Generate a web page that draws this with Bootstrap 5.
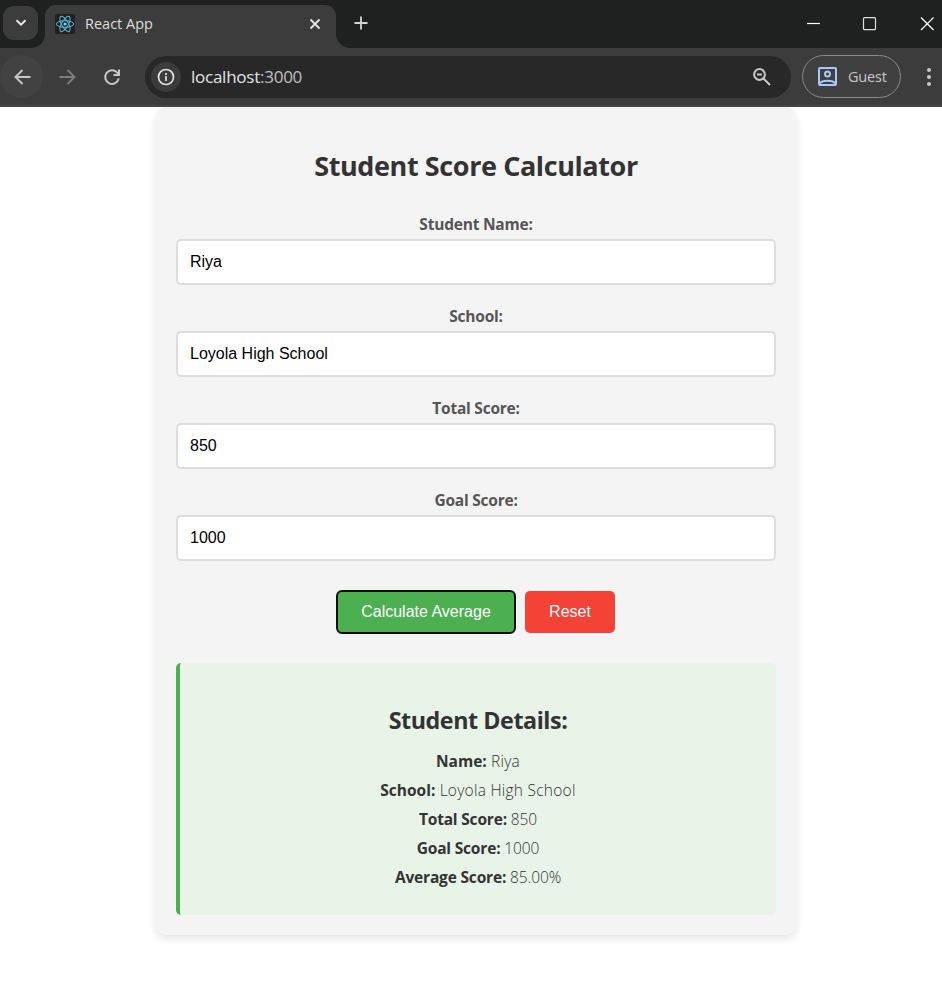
<!DOCTYPE html>
<html lang="en">
<head>
<meta charset="utf-8">
<meta name="viewport" content="width=device-width, initial-scale=1">
<title>React App</title>
<link href="https://cdn.jsdelivr.net/npm/bootstrap@5.3.0/dist/css/bootstrap.min.css" rel="stylesheet">
<style>
body{background:#fff;font-family:"Open Sans","Noto Sans",sans-serif;color:#333;min-height:100vh}
svg{display:block;flex:none}
/* browser window */
.tabstrip{height:48px;background:#1f2120;color:#dedede;padding-left:3px}
.tab-search{width:35px;height:34px;margin-top:6px;border-radius:11px;background:#3c3c3c}
.page-tab{position:relative;width:291px;height:43px;margin:5px 0 0 7px;padding:0 12px 6px 10px;border-radius:11px 11px 0 0;background:#3c3c3c}
.page-tab::before,.page-tab::after{content:"";position:absolute;bottom:0;width:14px;height:14px}
.page-tab::before{left:-14px;background:radial-gradient(circle at 0 0,transparent 13.5px,#3c3c3c 14.5px)}
.page-tab::after{right:-14px;background:radial-gradient(circle at 100% 0,transparent 13.5px,#3c3c3c 14.5px)}
.favicon{width:20px;height:20px;border-radius:2px;background:#202124}
.tab-title{font-size:14.5px;margin-left:10px;line-height:20px}
.win-ctl{padding:15px 6px 0 0}
.toolbar{height:59px;background:#3c3c3c;border-bottom:2px solid #474747;color:#c7c7c7}
.tool-btn{width:43px;height:43px;border-radius:50%}
.tool-hover{background:#424242}
.fwd{margin-left:2px;margin-right:2px}
.address{width:646px;height:42px;margin-left:12px;padding:0 19px 0 6px;border-radius:21px;background:#282828;color:#e3e3e3;font-size:17px;letter-spacing:-.25px}
.site-info{width:30px;height:30px;border-radius:50%;background:#3c3c3c}
.host{margin-left:10px}
.port{color:#c0c0c0}
.profile{width:99px;height:43px;margin-left:11px;padding-left:15px;border:1px solid #8a8a8a;border-radius:22px;font-size:14.5px;background:#404040}
.guest{margin-left:11px;letter-spacing:-.2px}
.kebab{margin-left:25px}
/* calculator */
.calc{width:640px;margin:0 auto 0 156px;padding:20px;border-radius:10px;background:#f4f4f4;box-shadow:0 4px 8px rgba(0,0,0,.1)}
.calc-title{font-size:27px;font-weight:700;line-height:38px;margin:20px 0 28px;letter-spacing:-.4px}
.field{height:92px}
.field .form-label{font-size:15.5px;font-weight:700;line-height:22px;height:26px;margin:0;color:#555;letter-spacing:-.22px}
.field .form-control{height:46px;padding:0 12px;border:2px solid #ddd;border-radius:5px;color:#000;font:16px "Liberation Sans",Arial,sans-serif}
.actions{gap:10px;padding-top:10px}
.act{height:42px;padding:0;border:0;border-radius:5px;color:#fff;font:16px "Liberation Sans",Arial,sans-serif}
.act-calc{width:178px;background:#4caf50;outline:2px solid #101010;outline-offset:-1px}
.act-reset{width:90px;background:#f44336}
.details{height:252px;margin-top:30px;padding-top:38px;border-left:4px solid #4caf50;border-radius:5px;background:#e8f4e8}
.details h2{font-size:23.3px;font-weight:700;line-height:38px;margin:0 0 8px;letter-spacing:-.45px}
.details p{font-size:15.5px;line-height:29px;margin:0;font-weight:300;letter-spacing:-.1px}
.details strong{font-weight:700;letter-spacing:-.18px}
.details .words{letter-spacing:.25px}
.details .words strong{letter-spacing:0}
</style>
</head>
<body>
<header>
  <div class="tabstrip d-flex align-items-start">
    <div class="tab-search d-flex align-items-center justify-content-center">
      <svg width="12" height="8" viewBox="0 0 12 8" fill="none" stroke="#e8e8e8" stroke-width="2"><path d="M1.500 1.200 6 5.700l4.500-4.500"/></svg>
    </div>
    <div class="page-tab d-flex align-items-center">
      <div class="favicon d-flex align-items-center justify-content-center">
        <svg width="20" height="20" viewBox="-10 -10 20 20" fill="none" stroke="#5bbcd8" stroke-width="1"><ellipse rx="8.600" ry="3.300"/><ellipse rx="8.600" ry="3.300" transform="rotate(60)"/><ellipse rx="8.600" ry="3.300" transform="rotate(120)"/><circle r="1.600" fill="#61dafb" stroke="none"/></svg>
      </div>
      <span class="tab-title me-auto">React App</span>
      <svg width="18" height="18" viewBox="0 0 18 18" stroke="#e3e3e3" stroke-width="1.900"><path d="m4.500 4.500 9 9m0-9-9 9"/></svg>
    </div>
    <svg class="ms-3 mt-3" width="18" height="15" viewBox="0 0 18 15" stroke="#d5d5d5" stroke-width="1.800"><path d="M2.500 7h13M9 .5v13"/></svg>
    <div class="win-ctl d-flex ms-auto">
      <svg width="130" height="18" viewBox="0 0 130 18" fill="none" stroke="#fff" stroke-width="1.200"><path d="M1 8.500h13"/><rect x="57.500" y="2.700" width="12" height="12" rx="1" stroke="#ddd"/><path d="m115 2.500 12.500 12.500m0-12.500L115 15"/></svg>
    </div>
  </div>
  <div class="toolbar d-flex align-items-center">
    <div class="tool-btn tool-hover d-flex align-items-center justify-content-center">
      <svg width="18" height="18" viewBox="0 0 18 18" fill="none" stroke="#c7c7c7" stroke-width="1.900"><path d="M17.500 9H3M9.500 2l-7 7 7 7"/></svg>
    </div>
    <div class="tool-btn fwd d-flex align-items-center justify-content-center">
      <svg width="18" height="18" viewBox="0 0 18 18" fill="none" stroke="#7d7d7d" stroke-width="1.900"><path d="M1.500 9H16M9.500 2l7 7-7 7"/></svg>
    </div>
    <div class="tool-btn d-flex align-items-center justify-content-center">
      <svg width="18" height="18" viewBox="0 0 18 18" fill="none" stroke="#c7c7c7" stroke-width="2"><path d="M15.700 10.500A6.800 6.800 0 1 1 14 4.400L15.700 6.200"/><path d="M16 1.500v5.500h-5.500"/></svg>
    </div>
    <div class="address d-flex align-items-center">
      <div class="site-info d-flex align-items-center justify-content-center">
        <svg width="18" height="18" viewBox="0 0 18 18" fill="none" stroke="#e3e3e3" stroke-width="1.700"><circle cx="9" cy="9" r="7.500"/><path d="M9 8v5M9 5v2"/></svg>
      </div>
      <span class="host me-auto">localhost<span class="port">:3000</span></span>
      <svg width="20" height="20" viewBox="0 0 20 20" fill="none" stroke="#c7c7c7" stroke-width="2"><circle cx="7.500" cy="7.500" r="5.400"/><path d="m11.500 11.500 6.500 6.500M5 7.500h5"/></svg>
    </div>
    <div class="profile d-flex align-items-center">
      <svg width="19" height="19" viewBox="0 0 19 19" fill="none" stroke="#a8c7fa" stroke-width="2"><rect x="1" y="1" width="17" height="17" rx="1"/><circle cx="9.500" cy="7" r="2.500"/><path d="M2 16.500C4 12.800 15 12.800 17 16.500"/></svg>
      <span class="guest">Guest</span>
    </div>
    <svg class="kebab" width="6" height="20" viewBox="0 0 6 20" fill="#c7c7c7"><circle cx="3" cy="3" r="2"/><circle cx="3" cy="10" r="2"/><circle cx="3" cy="17" r="2"/></svg>
  </div>
</header>
<main class="calc text-center">
  <h1 class="calc-title">Student Score Calculator</h1>
  <form>
    <div class="field"><label class="form-label d-block" for="name">Student Name:</label><input class="form-control" id="name" value="Riya"></div>
    <div class="field"><label class="form-label d-block" for="school">School:</label><input class="form-control" id="school" value="Loyola High School"></div>
    <div class="field"><label class="form-label d-block" for="total">Total Score:</label><input class="form-control" id="total" value="850"></div>
    <div class="field"><label class="form-label d-block" for="goal">Goal Score:</label><input class="form-control" id="goal" value="1000"></div>
    <div class="d-flex justify-content-center actions">
      <button type="button" class="btn act act-calc">Calculate Average</button>
      <button type="button" class="btn act act-reset">Reset</button>
    </div>
  </form>
  <section class="details">
    <h2>Student Details:</h2>
    <p class="words"><strong>Name:</strong> Riya</p>
    <p class="words"><strong>School:</strong> Loyola High School</p>
    <p><strong>Total Score:</strong> 850</p>
    <p><strong>Goal Score:</strong> 1000</p>
    <p><strong>Average Score:</strong> 85.00%</p>
  </section>
</main>
</body>
</html>
